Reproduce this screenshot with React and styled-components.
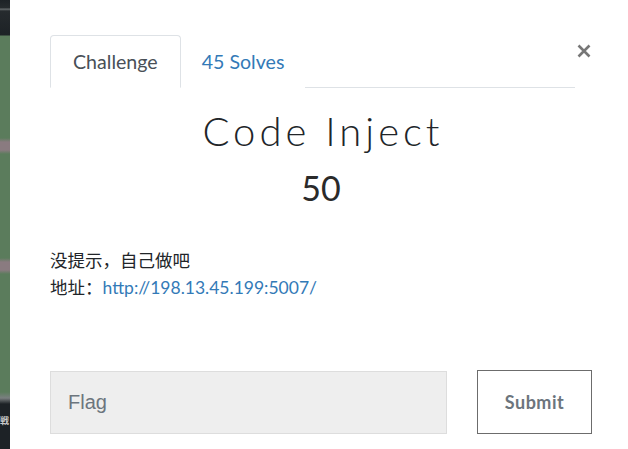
import React from "react";
import styled, { createGlobalStyle } from "styled-components";

const Global = createGlobalStyle`
  html, body { margin: 0; padding: 0; background: #fff; }
  body { font-family: Lato, "Noto Sans CJK SC", sans-serif; color: #212529; }
  * { box-sizing: border-box; }
`;

const Page = styled.div`
  display: flex;
  width: 628px;
  height: 449px;
  overflow: hidden;
`;

const Strip = styled.div`
  width: 10px;
  flex: none;
  position: relative;
  overflow: hidden;
  background: linear-gradient(
    to bottom,
    #1d2226 0px, #262b2e 8px, #6b7072 9px, #262b2e 11px, #1d2226 35px,
    #5b7c5c 36px, #5b7c5c 138px, #8a7b80 142px, #8a7b80 150px, #5b7c5c 154px,
    #5b7c5c 258px, #8a7b80 262px, #8a7b80 270px, #5b7c5c 274px,
    #5b7c5c 392px, #7a7f80 398px, #1d2226 404px, #1d2226 449px
  );
`;

const StripGlyph = styled.span`
  position: absolute;
  left: 0;
  top: 416px;
  font-size: 9px;
  line-height: 10px;
  color: #c9c9c9;
  font-family: "Noto Sans CJK JP", sans-serif;
  font-weight: 700;
`;

const Modal = styled.div`
  flex: 1;
  min-width: 0;
  padding: 35px 36px 0 40px;
  display: flex;
  flex-direction: column;
`;

const Header = styled.div`
  display: flex;
  align-items: flex-start;
`;

const Tabs = styled.div`
  display: flex;
  width: 525px;
  flex: none;
  border-bottom: 1px solid #dee2e6;
`;

const Tab = styled.div`
  height: 53px;
  padding: 0 ${(p) => (p.$active ? 22 : 20)}px;
  display: flex;
  align-items: center;
  font-size: 19.6px;
  margin-bottom: -1px;
  border: 1px solid ${(p) => (p.$active ? "#dee2e6" : "transparent")};
  border-bottom-color: ${(p) => (p.$active ? "#fff" : "transparent")};
  border-radius: 4px 4px 0 0;
  background: #fff;
  color: ${(p) => (p.$active ? "#495057" : "#337ab7")};
`;

const Close = styled.div`
  width: 17px;
  height: 20px;
  margin-top: 6px;
  display: flex;
  align-items: center;
  justify-content: center;
`;

const Title = styled.h1`
  margin: 20px 0 0;
  text-align: center;
  font-family: Lato, sans-serif;
  font-weight: 300;
  font-size: 40px;
  letter-spacing: 4px;
  text-indent: 4px;
  line-height: 46px;
  color: #212529;
`;

const Points = styled.div`
  text-align: center;
  font-family: Lato, sans-serif;
  font-weight: 400;
  font-size: 34px;
  line-height: 40px;
  margin-top: 14px;
  color: #2a2a2a;
`;

const Desc = styled.div`
  margin-top: 39px;
  font-size: 17.5px;
  line-height: 27px;
  color: #212529;
  font-family: Lato, "Noto Sans CJK SC", sans-serif;
`;

const Link = styled.a`
  color: #337ab7;
  text-decoration: none;
`;

const Form = styled.div`
  margin-top: 70px;
  display: flex;
  align-items: flex-start;
`;

const Input = styled.input`
  width: 397px;
  height: 63px;
  background: #eeeeee;
  border: 1px solid #dddddd;
  padding: 0 17px;
  font-family: "Liberation Sans", Arial, sans-serif;
  font-size: 20px;
  color: #495057;
  outline: none;
  &::placeholder { color: #6c757d; }
`;

const Button = styled.button`
  margin-left: 30px;
  width: 115px;
  height: 64px;
  background: #fff;
  border: 1px solid #6c6c6c;
  font-family: Lato, sans-serif;
  font-weight: 700;
  font-size: 18px;
  letter-spacing: 0.5px;
  color: #6c757d;
  margin-top: -1px;
`;

export default function App() {
  return (
    <>
      <Global />
      <Page>
        <Strip>
          <StripGlyph>戦</StripGlyph>
        </Strip>
        <Modal>
          <Header>
            <Tabs>
              <Tab $active>Challenge</Tab>
              <Tab>45 Solves</Tab>
            </Tabs>
            <Close>
              <svg width="14" height="14" viewBox="0 0 14 14">
                <path d="M1.5 1.5 L12.5 12.5 M12.5 1.5 L1.5 12.5" stroke="#777" strokeWidth="2.6" />
              </svg>
            </Close>
          </Header>
          <Title>Code Inject</Title>
          <Points>50</Points>
          <Desc>
            没提示，自己做吧
            <br />
            地址：<Link href="#">http://198.13.45.199:5007/</Link>
          </Desc>
          <Form>
            <Input placeholder="Flag" />
            <Button>Submit</Button>
          </Form>
        </Modal>
      </Page>
    </>
  );
}
